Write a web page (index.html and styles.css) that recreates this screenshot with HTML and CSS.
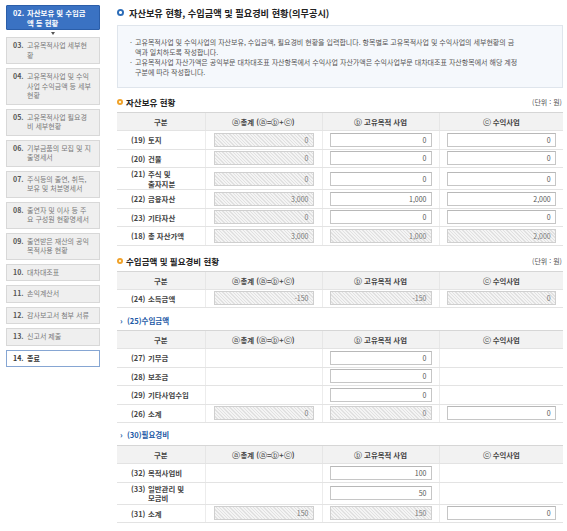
FILE: index.html
```html
<!DOCTYPE html>
<html lang="ko">
<head>
<meta charset="utf-8">
<title>자산보유 현황</title>
<link rel="stylesheet" href="styles.css">
</head>
<body>
<div class="page">
  <nav class="side">
    <div class="step active"><span class="n">02.</span><span class="t">자산보유 및 수입금<br>액 등 현황</span></div>
    <div class="arrow"></div>
    <div class="step"><span class="n">03.</span><span class="t">고유목적사업 세부현<br>황</span></div>
    <div class="step"><span class="n">04.</span><span class="t">고유목적사업 및 수익<br>사업 수익금액 등 세부<br>현황</span></div>
    <div class="step"><span class="n">05.</span><span class="t">고유목적사업 필요경<br>비 세부현황</span></div>
    <div class="step"><span class="n">06.</span><span class="t">기부금품의 모집 및 지<br>출명세서</span></div>
    <div class="step"><span class="n">07.</span><span class="t">주식등의 출연, 취득,<br>보유 및 처분명세서</span></div>
    <div class="step"><span class="n">08.</span><span class="t">출연자 및 이사 등 주<br>요 구성원 현황명세서</span></div>
    <div class="step"><span class="n">09.</span><span class="t">출연받은 재산의 공익<br>목적사용 현황</span></div>
    <div class="step"><span class="n">10.</span><span class="t">대차대조표</span></div>
    <div class="step"><span class="n">11.</span><span class="t">손익계산서</span></div>
    <div class="step"><span class="n">12.</span><span class="t">감사보고서 첨부 서류</span></div>
    <div class="step"><span class="n">13.</span><span class="t">신고서 제출</span></div>
    <div class="step last"><span class="n">14.</span><span class="t">종료</span></div>
  </nav>

  <main class="main">
    <h1 class="title"><span class="ico-blue"></span>자산보유 현황, 수입금액 및 필요경비 현황(의무공시)</h1>

    <div class="info">
      <p><span class="b">·</span><span class="tx">고유목적사업 및 수익사업의 자산보유, 수입금액, 필요경비 현황을 입력합니다. 항목별로 고유목적사업 및 수익사업의 세부현황의 금<br>액과 일치하도록 작성합니다.</span></p>
      <p><span class="b">·</span><span class="tx">고유목적사업 자산가액은 공익부문 대차대조표 자산항목에서 수익사업 자산가액은 수익사업부문 대차대조표 자산항목에서 해당 계정<br>구분에 따라 작성합니다.</span></p>
    </div>

    <div class="sec sec1">
      <h2><span class="ico-orange"></span>자산보유 현황</h2>
      <span class="unit">(단위 : 원)</span>
    </div>
    <table class="grid">
      <colgroup><col class="c1"><col class="c2"><col class="c3"><col class="c4"></colgroup>
      <thead>
        <tr><th>구분</th><th><span class="cl">ⓐ</span>총계 (<span class="cl">ⓐ</span>=<span class="cl">ⓑ</span>+<span class="cl">ⓒ</span>)</th><th><span class="cl">ⓑ</span> 고유목적 사업</th><th><span class="cl">ⓒ</span> 수익사업</th></tr>
      </thead>
      <tbody>
        <tr><td class="lbl"><span class="no">(19)</span><span>토지</span></td>
          <td><input class="f w2 ro" value="0" readonly></td>
          <td><input class="f w3" value="0"></td>
          <td><input class="f w4" value="0"></td></tr>
        <tr><td class="lbl"><span class="no">(20)</span><span>건물</span></td>
          <td><input class="f w2 ro" value="0" readonly></td>
          <td><input class="f w3" value="0"></td>
          <td><input class="f w4" value="0"></td></tr>
        <tr class="tall"><td class="lbl"><span class="no">(21)</span><span>주식 및<br>출자지분</span></td>
          <td><input class="f w2 ro" value="0" readonly></td>
          <td><input class="f w3" value="0"></td>
          <td><input class="f w4" value="0"></td></tr>
        <tr><td class="lbl"><span class="no">(22)</span><span>금융자산</span></td>
          <td><input class="f w2 ro" value="3,000" readonly></td>
          <td><input class="f w3" value="1,000"></td>
          <td><input class="f w4" value="2,000"></td></tr>
        <tr><td class="lbl"><span class="no">(23)</span><span>기타자산</span></td>
          <td><input class="f w2 ro" value="0" readonly></td>
          <td><input class="f w3" value="0"></td>
          <td><input class="f w4" value="0"></td></tr>
        <tr><td class="lbl"><span class="no">(18)</span><span>총 자산가액</span></td>
          <td><input class="f w2 ro" value="3,000" readonly></td>
          <td><input class="f w3 ro" value="1,000" readonly></td>
          <td><input class="f w4 ro" value="2,000" readonly></td></tr>
      </tbody>
    </table>

    <div class="sec sec2">
      <h2><span class="ico-orange"></span>수입금액 및 필요경비 현황</h2>
      <span class="unit">(단위 : 원)</span>
    </div>
    <table class="grid">
      <colgroup><col class="c1"><col class="c2"><col class="c3"><col class="c4"></colgroup>
      <thead>
        <tr><th>구분</th><th><span class="cl">ⓐ</span>총계 (<span class="cl">ⓐ</span>=<span class="cl">ⓑ</span>+<span class="cl">ⓒ</span>)</th><th><span class="cl">ⓑ</span> 고유목적 사업</th><th><span class="cl">ⓒ</span> 수익사업</th></tr>
      </thead>
      <tbody>
        <tr><td class="lbl"><span class="no">(24)</span><span>소득금액</span></td>
          <td><input class="f w2 ro" value="-150" readonly></td>
          <td><input class="f w3 ro" value="-150" readonly></td>
          <td><input class="f w4 ro" value="0" readonly></td></tr>
      </tbody>
    </table>

    <div class="sub sub1"><span class="chev">›</span>(25)수입금액</div>
    <table class="grid">
      <colgroup><col class="c1"><col class="c2"><col class="c3"><col class="c4"></colgroup>
      <thead>
        <tr><th>구분</th><th><span class="cl">ⓐ</span>총계 (<span class="cl">ⓐ</span>=<span class="cl">ⓑ</span>+<span class="cl">ⓒ</span>)</th><th><span class="cl">ⓑ</span> 고유목적 사업</th><th><span class="cl">ⓒ</span> 수익사업</th></tr>
      </thead>
      <tbody>
        <tr><td class="lbl"><span class="no">(27)</span><span>기부금</span></td>
          <td></td>
          <td><input class="f w3" value="0"></td>
          <td></td></tr>
        <tr><td class="lbl"><span class="no">(28)</span><span>보조금</span></td>
          <td></td>
          <td><input class="f w3" value="0"></td>
          <td></td></tr>
        <tr><td class="lbl"><span class="no">(29)</span><span>기타사업수입</span></td>
          <td></td>
          <td><input class="f w3" value="0"></td>
          <td></td></tr>
        <tr><td class="lbl"><span class="no">(26)</span><span>소계</span></td>
          <td><input class="f w2 ro" value="0" readonly></td>
          <td><input class="f w3 ro" value="0" readonly></td>
          <td><input class="f w4" value="0"></td></tr>
      </tbody>
    </table>

    <div class="sub sub2"><span class="chev">›</span>(30)필요경비</div>
    <table class="grid">
      <colgroup><col class="c1"><col class="c2"><col class="c3"><col class="c4"></colgroup>
      <thead>
        <tr><th>구분</th><th><span class="cl">ⓐ</span>총계 (<span class="cl">ⓐ</span>=<span class="cl">ⓑ</span>+<span class="cl">ⓒ</span>)</th><th><span class="cl">ⓑ</span> 고유목적 사업</th><th><span class="cl">ⓒ</span> 수익사업</th></tr>
      </thead>
      <tbody>
        <tr><td class="lbl"><span class="no">(32)</span><span>목적사업비</span></td>
          <td></td>
          <td><input class="f w3" value="100"></td>
          <td></td></tr>
        <tr class="tall"><td class="lbl"><span class="no">(33)</span><span>일반관리 및<br>모금비</span></td>
          <td></td>
          <td><input class="f w3" value="50"></td>
          <td></td></tr>
        <tr><td class="lbl"><span class="no">(31)</span><span>소계</span></td>
          <td><input class="f w2 ro" value="150" readonly></td>
          <td><input class="f w3 ro" value="150" readonly></td>
          <td><input class="f w4" value="0"></td></tr>
      </tbody>
    </table>
  </main>
</div>
</body>
</html>
```

FILE: styles.css
```css
html, body {
  margin: 0;
  background: #fff;
}
body {
  font-family: "Noto Sans CJK KR", "Noto Sans", sans-serif;
  color: #444;
}
.page {
  display: flex;
  align-items: flex-start;
  padding: 5px 4px 0 6px;
}

/* ---------- sidebar ---------- */
.side {
  width: 94px;
  flex-shrink: 0;
  display: flex;
  flex-direction: column;
}
.step {
  display: flex;
  border: 1px solid #d8d8d8;
  background: #efefef;
  padding: 3px 2px 3px 6px;
  margin-bottom: 4px;
  font-size: 7px;
  line-height: 9.5px;
  color: #7a7a7a;
}
.step .n {
  width: 14px;
  flex-shrink: 0;
  font-weight: bold;
  color: #555;
}
.step .t {
  white-space: nowrap;
}
.step.active {
  background: #3a72c3;
  border-color: #2b5ea9;
  border-radius: 1px;
  color: #fff;
  font-weight: bold;
  padding: 2px 2px 2px 6px;
  margin-bottom: 0;
  font-size: 7.4px;
}
.step.active .n {
  color: #fff;
}
.arrow {
  height: 7px;
  display: flex;
  justify-content: center;
  align-items: center;
}
.arrow::before {
  content: "";
  border-left: 2.5px solid transparent;
  border-right: 2.5px solid transparent;
  border-top: 3px solid #555;
}
.step.last {
  background: #fff;
  border-color: #86a6d3;
  color: #333;
  font-weight: bold;
  margin-bottom: 0;
}
.step.last .n {
  color: #333;
}

/* ---------- main ---------- */
.main {
  margin-left: 17px;
  width: 446px;
}
.title {
  margin: 0;
  height: 15px;
  display: flex;
  align-items: center;
  gap: 5px;
  font-size: 9.2px;
  font-weight: bold;
  color: #222;
  white-space: nowrap;
}
.ico-blue {
  width: 7px;
  height: 7px;
  border-radius: 50%;
  background: radial-gradient(circle, #fff 0 1.3px, #2d6db8 1.6px);
  flex-shrink: 0;
}
.info {
  margin-top: 5px;
  border: 1px solid #dfe5ec;
  background: #f5f8fc;
  padding: 11px 10px 10px 12px;
  font-size: 7px;
  line-height: 10px;
  color: #555;
}
.info p {
  margin: 0;
  display: flex;
}
.info .b {
  width: 5px;
  flex-shrink: 0;
}
.info .tx {
  white-space: nowrap;
}

.sec {
  display: flex;
  justify-content: space-between;
  align-items: center;
  height: 12px;
  margin-bottom: 4px;
}
.sec1 { margin-top: 8px; }
.sec2 { margin-top: 9px; }
.sec h2 {
  margin: 0;
  display: flex;
  align-items: center;
  gap: 3px;
  font-size: 8.5px;
  font-weight: bold;
  color: #222;
}
.ico-orange {
  width: 6px;
  height: 6px;
  border-radius: 50%;
  background: radial-gradient(circle, #fff3c8 0 1.2px, #f0a028 1.6px);
  flex-shrink: 0;
}
.unit {
  font-size: 7px;
  color: #555;
  padding-right: 1px;
}

.sub {
  height: 12px;
  line-height: 12px;
  padding-left: 3px;
  font-size: 7.5px;
  font-weight: bold;
  color: #1d5aa6;
}
.sub .chev {
  display: inline-block;
  width: 7px;
  font-size: 8px;
}
.sub1 { margin: 7px 0 3px; }
.sub2 { margin: 6px 0 4px; }

/* ---------- tables ---------- */
.grid {
  width: 446px;
  border-collapse: collapse;
  table-layout: fixed;
}
.grid .c1 { width: 88px; }
.grid .c2 { width: 117px; }
.grid .c3 { width: 117px; }
.grid .c4 { width: 124px; }
.grid th {
  height: 17px;
  padding: 0;
  background: #f2f2f2;
  border-top: 1px solid #d6d6d6;
  border-bottom: 1px solid #e3e3e3;
  border-left: 1px solid #e6e6e6;
  font-size: 7.4px;
  font-weight: bold;
  color: #444;
  text-align: center;
  white-space: nowrap;
}
.grid th .cl {
  font-family: "DejaVu Sans", sans-serif;
  font-size: 8px;
  font-weight: normal;
  line-height: 1;
}
.grid th:first-child,
.grid td:first-child {
  border-left: none;
}
.grid td {
  height: 17.5px;
  padding: 0;
  border-bottom: 1px solid #e3e3e3;
  border-left: 1px solid #ececec;
  vertical-align: middle;
}
.grid tr.tall td {
  height: 21px;
}
.grid td.lbl {
  padding-left: 14px;
  font-size: 7.4px;
  font-weight: bold;
  line-height: 9.5px;
  color: #444;
  white-space: nowrap;
}
.lbl .no {
  display: inline-block;
  width: 17px;
  vertical-align: top;
}
.lbl .no + span {
  display: inline-block;
  vertical-align: top;
}

.f {
  display: block;
  margin: 0 auto;
  height: 14px;
  box-sizing: border-box;
  border: 1px solid #c6c6c6;
  border-top-color: #b8b8b8;
  background: #fff;
  padding: 0 4px 0 0;
  font-family: "Noto Sans CJK KR", "Noto Sans", sans-serif;
  font-size: 7px;
  color: #555;
  text-align: right;
  outline: none;
}
.f.w2 { width: 100px; }
.f.w3 { width: 102px; }
.f.w4 { width: 109px; }
.f.ro {
  background: repeating-linear-gradient(45deg, #f4f4f4 0 1.4px, #e1e1e1 1.4px 2.4px);
  border-color: #cfcfcf;
  color: #777;
}
```
